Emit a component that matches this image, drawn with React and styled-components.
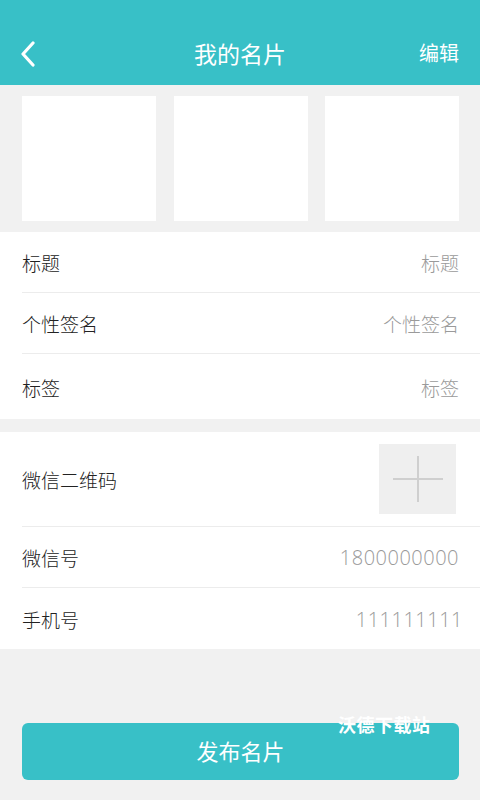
import React from "react";
import styled, { createGlobalStyle } from "styled-components";

const GlobalStyle = createGlobalStyle`
  html, body {
    margin: 0;
    padding: 0;
    background: #f1f1f1;
    font-family: "Noto Sans CJK SC", "Noto Sans", sans-serif;
  }
`;

const TEAL = "#38c0c7";

const Page = styled.div`
  width: 480px;
  min-height: 800px;
  background: #f1f1f1;
  position: relative;
`;

const Header = styled.header`
  height: 85px;
  background: ${TEAL};
  display: flex;
  align-items: flex-end;
  justify-content: space-between;
  padding: 0 20px 16px 20px;
  box-sizing: border-box;
  color: #fff;
  position: relative;
`;

const BackBtn = styled.div`
  width: 40px;
  height: 32px;
  display: flex;
  align-items: center;
  margin-bottom: -1px;
`;

const Title = styled.h1`
  position: absolute;
  left: 0;
  right: 0;
  bottom: 16px;
  margin: 0;
  text-align: center;
  font-size: 23px;
  font-weight: 400;
  line-height: 32px;
  pointer-events: none;
`;

const Edit = styled.span`
  font-size: 20px;
  line-height: 32px;
  margin-right: 1px;
`;

const Photos = styled.div`
  display: grid;
  grid-template-columns: 134px 134px 134px;
  column-gap: 17.5px;
  padding: 11px 21px 11px 22px;
`;

const Photo = styled.div`
  height: 125px;
  background: #fff;
`;

const Section = styled.section`
  background: #fff;
  margin-bottom: ${(p) => p.gap || 0}px;
`;

const Row = styled.div`
  height: ${(p) => p.h || 61}px;
  margin-left: 22px;
  padding-right: ${(p) => p.pr || 21}px;
  padding-top: 1px;
  display: flex;
  align-items: center;
  justify-content: space-between;
  border-bottom: ${(p) => (p.last ? "none" : "1px solid #ececec")};
  box-sizing: border-box;
`;

const Label = styled.span`
  font-size: 19px;
  font-weight: 300;
  color: #222;
`;

const Value = styled.span`
  font-size: 19px;
  font-weight: 300;
  color: #9a9a9a;
`;

const Num = styled.span`
  font-family: "Open Sans", "Noto Sans", sans-serif;
  font-size: 20px;
  font-weight: 300;
  letter-spacing: 0.5px;
  color: #9a9a9a;
`;

const QrBox = styled.div`
  width: 77px;
  height: 70px;
  background: #efefef;
  display: flex;
  align-items: center;
  justify-content: center;
  margin-top: -1px;
`;

const Footer = styled.div`
  padding: 74px 21px 0 22px;
  position: relative;
`;

const Publish = styled.button`
  width: 100%;
  height: 57px;
  border: none;
  border-radius: 6px;
  background: ${TEAL};
  color: #fff;
  font-family: inherit;
  font-size: 22px;
  padding: 0 0 4px 0;
`;

const Watermark = styled.span`
  position: absolute;
  left: 338px;
  top: 62px;
  color: #fff;
  font-size: 18px;
  font-weight: 700;
  letter-spacing: 0.5px;
`;

export default function App() {
  return (
    <Page>
      <GlobalStyle />
      <Header>
        <BackBtn>
          <svg width="16" height="26" viewBox="0 0 16 26">
            <path d="M13 2 L3 13 L13 24" fill="none" stroke="#fff" strokeWidth="3.2" strokeLinecap="round" strokeLinejoin="round" />
          </svg>
        </BackBtn>
        <Title>我的名片</Title>
        <Edit>编辑</Edit>
      </Header>
      <Photos>
        <Photo />
        <Photo />
        <Photo />
      </Photos>
      <Section gap={13}>
        <Row>
          <Label>标题</Label>
          <Value>标题</Value>
        </Row>
        <Row>
          <Label>个性签名</Label>
          <Value>个性签名</Value>
        </Row>
        <Row h={65} last>
          <Label>标签</Label>
          <Value>标签</Value>
        </Row>
      </Section>
      <Section>
        <Row h={95} pr={24}>
          <Label>微信二维码</Label>
          <QrBox>
            <svg width="50" height="46" viewBox="0 0 50 46">
              <path d="M0 23 H50 M25 0 V46" stroke="#cfcfcf" strokeWidth="2" />
            </svg>
          </QrBox>
        </Row>
        <Row>
          <Label>微信号</Label>
          <Num>1800000000</Num>
        </Row>
        <Row last pr={17}>
          <Label>手机号</Label>
          <Num>111111111</Num>
        </Row>
      </Section>
      <Footer>
        <Publish>发布名片</Publish>
        <Watermark>沃德下载站</Watermark>
      </Footer>
    </Page>
  );
}
